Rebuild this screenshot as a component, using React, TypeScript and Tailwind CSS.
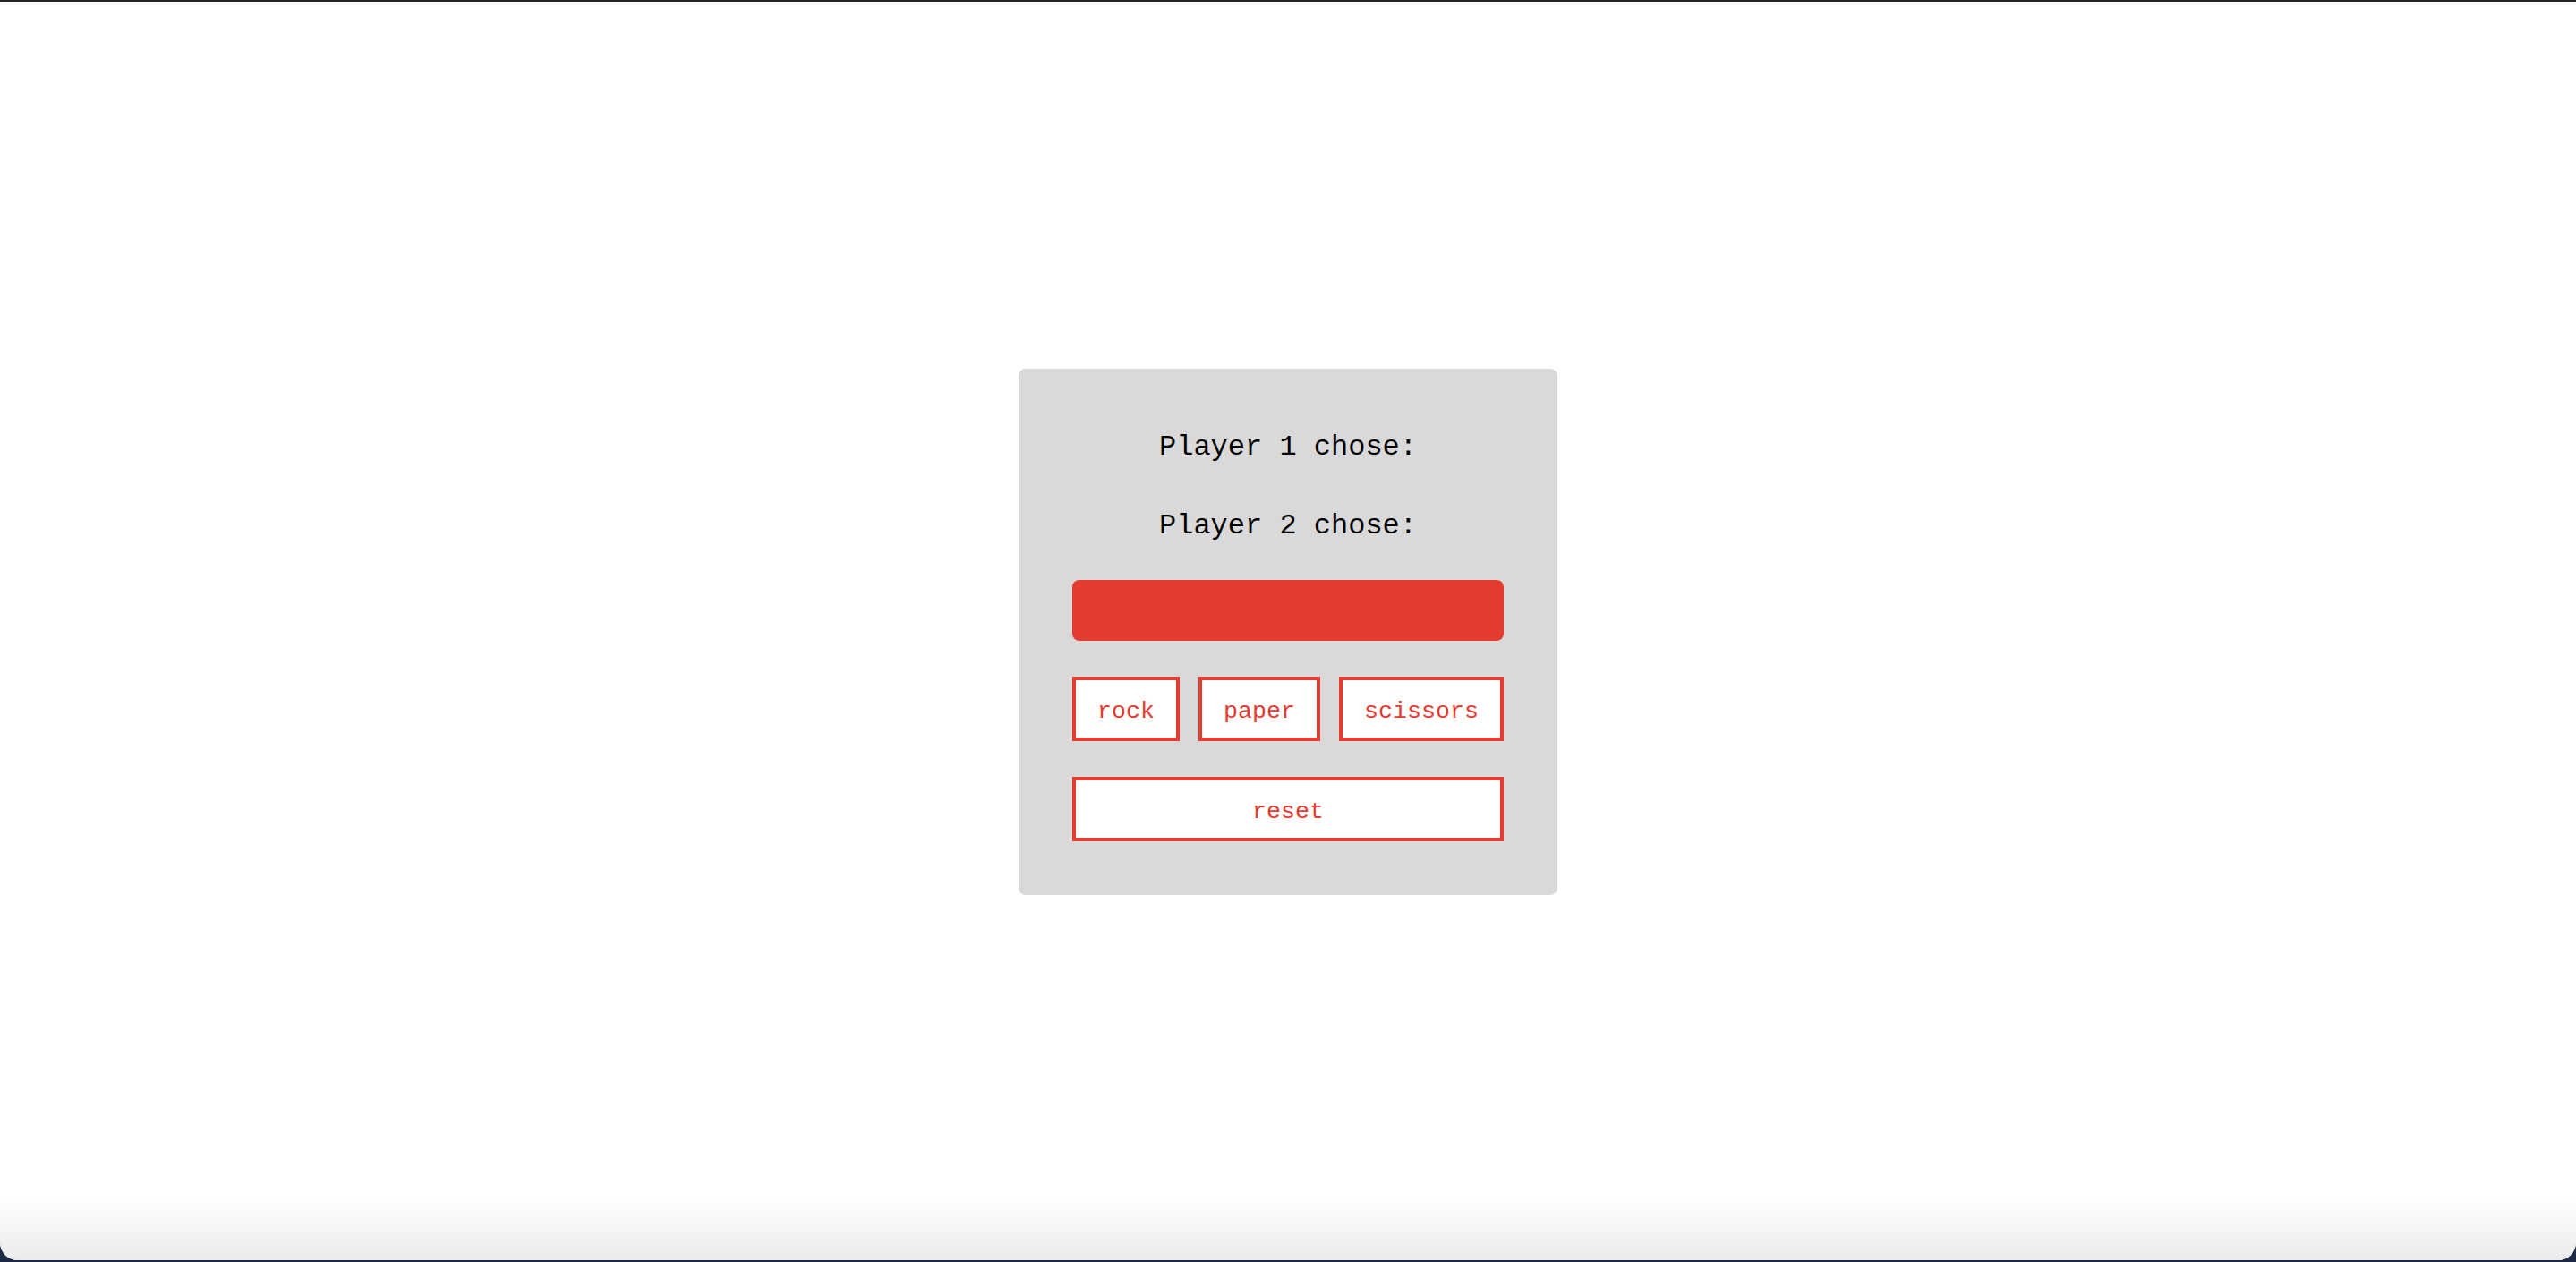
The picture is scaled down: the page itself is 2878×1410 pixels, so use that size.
const CHOICES = ['rock', 'paper', 'scissors'];

export default function App() {
    return (
        <div
            className="h-[1410px] w-full bg-[#1c2a45]"
            style={{ fontFamily: "'Liberation Mono', 'DejaVu Sans Mono', monospace" }}
        >
            <div className="h-[1408px] flex items-center justify-center bg-white border-t-2 border-[#242424] rounded-b-[20px] bg-gradient-to-b from-white from-[95%] to-[#ebebeb]">
                {/* Game card */}
                <div className="w-[602px] mt-[2px] bg-[#d9d9d9] rounded-[8px] p-[60px] flex flex-col gap-[40px]">
                    <p className="h-[48px] pt-[4px] text-[32px] leading-[48px] text-center text-black">Player 1 chose:</p>
                    <p className="h-[48px] pt-[4px] text-[32px] leading-[48px] text-center text-black">Player 2 chose:</p>

                    <div className="h-[68px] rounded-[8px] bg-[#e53b30]" />

                    <div className="flex justify-between">
                        {CHOICES.map((c) => (
                            <button
                                key={c}
                                className="h-[72px] px-[24px] pt-[6px] bg-white border-4 border-[#e53b30] text-[#e53b30] text-[26.67px]"
                            >
                                {c}
                            </button>
                        ))}
                    </div>

                    <button className="h-[72px] w-full pt-[6px] bg-white border-4 border-[#e53b30] text-[#e53b30] text-[26.67px]">
                        reset
                    </button>
                </div>
            </div>
        </div>
    );
}
